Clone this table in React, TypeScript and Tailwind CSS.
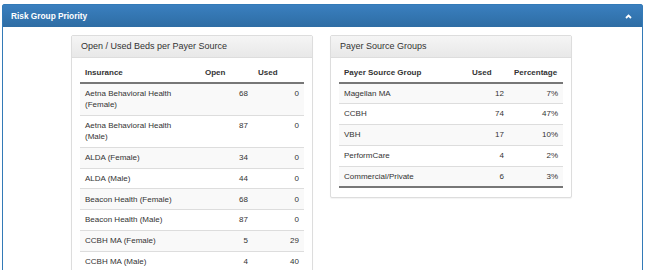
import React from 'react';

type Bed = { name: string; open: number; used: number };
type Group = { name: string; used: number; pct: string };

const beds: Bed[] = [
  { name: 'Aetna Behavioral Health (Female)', open: 68, used: 0 },
  { name: 'Aetna Behavioral Health (Male)', open: 87, used: 0 },
  { name: 'ALDA (Female)', open: 34, used: 0 },
  { name: 'ALDA (Male)', open: 44, used: 0 },
  { name: 'Beacon Health (Female)', open: 68, used: 0 },
  { name: 'Beacon Health (Male)', open: 87, used: 0 },
  { name: 'CCBH MA (Female)', open: 5, used: 29 },
  { name: 'CCBH MA (Male)', open: 4, used: 40 },
];

const groups: Group[] = [
  { name: 'Magellan MA', used: 12, pct: '7%' },
  { name: 'CCBH', used: 74, pct: '47%' },
  { name: 'VBH', used: 17, pct: '10%' },
  { name: 'PerformCare', used: 4, pct: '2%' },
  { name: 'Commercial/Private', used: 6, pct: '3%' },
];

const th = 'px-[5px] pt-[4px] pb-[3.1px] text-left font-bold border-b-2 border-[#777]';
const td = 'px-[5px] py-[4.2px] border-t border-[#ddd] align-top';

const Card = ({ title, children }: { title: string; children: React.ReactNode }) => (
  <div className="w-[242px] self-start bg-white border border-[#ddd] rounded-[2px] shadow-[0_1px_1px_rgba(0,0,0,0.05)]">
    <div className="h-[22px] flex items-center pl-[9px] bg-gradient-to-b from-[#f5f5f5] to-[#e8e8e8] border-b border-[#ddd] text-[9px] text-[#333]">
      {title}
    </div>
    <div className="px-[8px] pt-[5px] pb-[9px]">{children}</div>
  </div>
);

export default function App() {
  return (
    <div
      className="min-h-screen bg-white pt-[4px] px-[2px] text-[#333]"
      style={{ fontFamily: '"Liberation Sans", Arial, sans-serif' }}
    >
      <div className="border border-[#337ab7] rounded-t-[2px]">
        <div className="h-[22px] flex items-center justify-between pl-[8px] pr-[10px] bg-gradient-to-b from-[#3a7fbf] to-[#2e6da4] text-white">
          <span className="text-[8.3px] font-bold">Risk Group Priority</span>
          <svg width="7" height="5" viewBox="0 0 7 5">
            <polyline points="1,4 3.5,1.5 6,4" fill="none" stroke="#fff" strokeWidth="1.8" />
          </svg>
        </div>

        <div className="flex justify-center items-start gap-[17px] pt-[8px] pb-[16px] pr-[2px]">
          <Card title="Open / Used Beds per Payer Source">
            <table className="w-[224px] table-fixed border-collapse text-[8px] leading-[11.4px]">
              <colgroup>
                <col className="w-[120px]" />
                <col className="w-[53px]" />
                <col className="w-[51px]" />
              </colgroup>
              <thead>
                <tr>
                  <th className={th}>Insurance</th>
                  <th className={th}>Open</th>
                  <th className={th}>Used</th>
                </tr>
              </thead>
              <tbody>
                {beds.map((b, i) => (
                  <tr key={b.name} className={i % 2 === 0 ? 'bg-[#f9f9f9]' : 'bg-white'}>
                    <td className={td}>{b.name}</td>
                    <td className={`${td} text-right`}>{b.open}</td>
                    <td className={`${td} text-right`}>{b.used}</td>
                  </tr>
                ))}
              </tbody>
            </table>
          </Card>

          <Card title="Payer Source Groups">
            <table className="w-[224px] table-fixed border-collapse text-[8px] leading-[11.4px] border-b-2 border-[#777]">
              <colgroup>
                <col className="w-[128px]" />
                <col className="w-[42px]" />
                <col className="w-[54px]" />
              </colgroup>
              <thead>
                <tr>
                  <th className={th}>Payer Source Group</th>
                  <th className={th}>Used</th>
                  <th className={th}>Percentage</th>
                </tr>
              </thead>
              <tbody>
                {groups.map((g, i) => (
                  <tr key={g.name} className={i % 2 === 0 ? 'bg-[#f9f9f9]' : 'bg-white'}>
                    <td className={td}>{g.name}</td>
                    <td className={`${td} text-right`}>{g.used}</td>
                    <td className={`${td} text-right`}>{g.pct}</td>
                  </tr>
                ))}
              </tbody>
            </table>
          </Card>
        </div>
      </div>
    </div>
  );
}
